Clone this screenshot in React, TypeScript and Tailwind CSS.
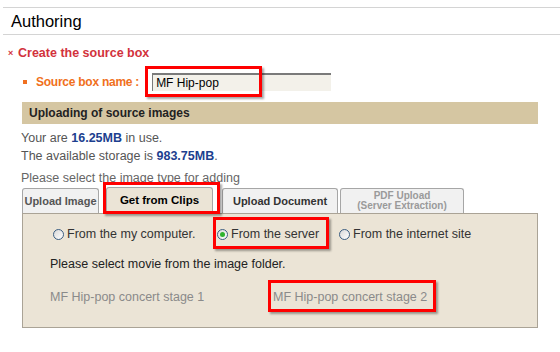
import React from 'react';

const font = { fontFamily: '"Liberation Sans", Arial, sans-serif' };

const RedBox: React.FC<{ className: string }> = ({ className }) => (
  <span className={`pointer-events-none absolute border-[3px] border-[#ff0000] shadow-[2px_2px_2px_rgba(0,0,0,0.35)] ${className}`} />
);

const Radio: React.FC<{ checked?: boolean }> = ({ checked }) => (
  <span className="inline-flex h-[11px] w-[11px] shrink-0 items-center justify-center rounded-full border border-[#3b5e82] bg-gradient-to-br from-[#d8d8d8] to-white">
    {checked && <span className="h-[5px] w-[5px] rounded-full bg-[#2fb32f]" />}
  </span>
);

export default function App() {
  return (
    <div className="h-[352px] w-[560px] bg-white text-[12.5px] text-[#555]" style={font}>
      <div className="ml-[3px] pt-[7px]">
        <div className="flex h-[28px] items-center border-y border-[#d4d4d4] pl-[8px] text-[16.5px] text-black">Authoring</div>
      </div>

      <div className="ml-[8px] mt-[10px] flex h-[16px] items-center text-[12.5px] font-bold text-[#d2323c]">
        <span className="w-[10px] text-[9px] leading-none">×</span>
        <span>Create the source box</span>
      </div>

      <div className="ml-[23px] mt-[12px] flex h-[18px] items-center">
        <span className="h-[4px] w-[4px] bg-[#f07020]" />
        <span className="ml-[9px] text-[12px] font-bold tracking-[-0.25px] text-[#f07020]">Source box name :</span>
        <div className="relative ml-[13px]">
          <div className="h-[18px] w-[179px] border-l border-t-2 border-[#7a7a7a] bg-[#f3f1ea] pl-[3px] text-[12px] leading-[16px] text-black">MF Hip-pop</div>
          <RedBox className="-left-[7px] -top-[7px] h-[31px] w-[117px]" />
        </div>
      </div>

      <div className="mx-[22px] mt-[11px]">
        <div className="flex h-[22px] items-center bg-[#d5c6a2] pl-[7px] text-[12px] font-bold text-[#222]">Uploading of source images</div>

        <div className="ml-[-1px] mt-[5px] leading-[18px]">
          <div>Your are <b className="text-[#1d3f8f]">16.25MB</b> in use.</div>
          <div>The available storage is <b className="text-[#1d3f8f]">983.75MB</b>.</div>
          <div className="mt-[4px] text-[#666]">Please select the image type for adding</div>
        </div>

        <div className="flex h-[26px] items-end text-[11px] font-bold">
          <div className="flex h-[25px] w-[77px] items-center justify-center rounded-t-[3px] border border-b-0 border-[#a6a6a6] bg-[#f1f1f1] text-[#555]">Upload Image</div>
          <div className="relative ml-[7px]">
            <div className="flex h-[26px] w-[107px] items-center justify-center rounded-t-[3px] border border-b-0 border-[#a6a6a6] bg-[#ebe4d6] text-[11.5px] text-black">Get from Clips</div>
            <RedBox className="-left-[3px] -top-[5px] h-[32px] w-[117px]" />
          </div>
          <div className="ml-[9px] flex h-[25px] w-[116px] items-center justify-center rounded-t-[3px] border border-b-0 border-[#a6a6a6] bg-[#f1f1f1] text-[#333]">Upload Document</div>
          <div className="ml-[2px] flex h-[25px] w-[124px] flex-col items-center justify-center rounded-t-[3px] border border-b-0 border-[#a6a6a6] bg-[#f1f1f1] text-[10px] leading-[10px] text-[#9a9a9a]">
            <span>PDF Upload</span>
            <span>(Server Extraction)</span>
          </div>
        </div>

        <div className="h-[115px] border border-[#aaa396] bg-[#ebe4d6] pl-[27px] pt-[12px] text-[#333]">
          <div className="flex h-[16px] items-center">
            <span className="flex w-[167px] items-center pl-[3px]">
              <Radio />
              <span className="ml-[3px]">From the my computer.</span>
            </span>
            <span className="relative flex w-[122px] items-center">
              <Radio checked />
              <span className="ml-[3px]">From the server</span>
              <RedBox className="-left-[4px] -top-[8px] h-[32px] w-[116px]" />
            </span>
            <span className="flex items-center">
              <Radio />
              <span className="ml-[3px]">From the internet site</span>
            </span>
          </div>
          <div className="mt-[14px] h-[16px] leading-[16px] text-[#222]">Please select movie from the image folder.</div>
          <div className="mt-[17px] flex h-[16px] leading-[16px] text-[#8a8a8a]">
            <span className="w-[223px]">MF Hip-pop concert stage 1</span>
            <span className="relative">
              MF Hip-pop concert stage 2
              <RedBox className="-left-[5px] -top-[9px] h-[32px] w-[168px]" />
            </span>
          </div>
        </div>
      </div>
    </div>
  );
}
